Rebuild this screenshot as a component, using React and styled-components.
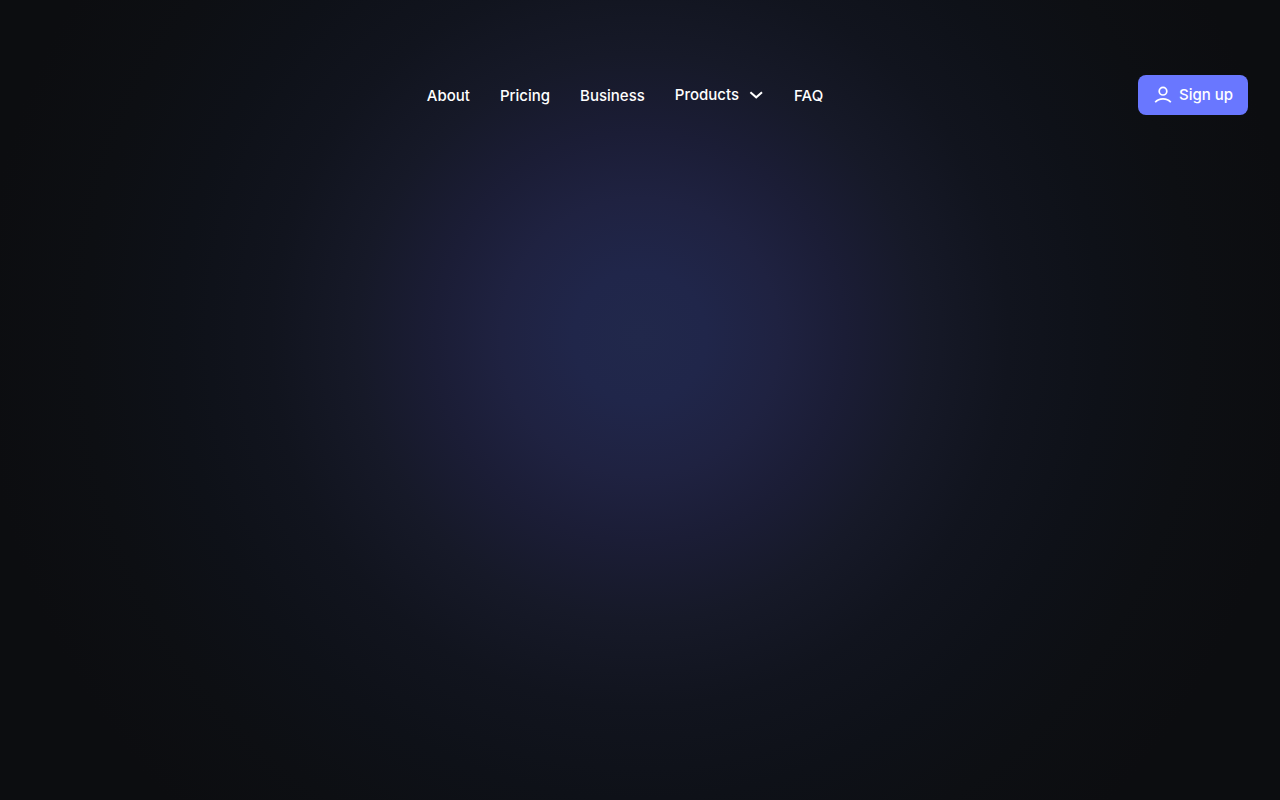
import React from 'react';
import styled, { createGlobalStyle } from 'styled-components';

const links = ['About', 'Pricing', 'Business'];

function App() {
    return (
        <>
            <GlobalStyle />
            <Page>
                <Header>
                    <Nav>
                        {links.map((link) => (
                            <NavLink key={link} href="#">{link}</NavLink>
                        ))}
                        <NavButton type="button">
                            Products
                            <svg width="16" height="16" viewBox="0 0 16 16" fill="none" aria-hidden="true">
                                <path d="M2.4 5.2 8.2 10.3l5.8-5.1" stroke="currentColor" strokeWidth="2" />
                            </svg>
                        </NavButton>
                        <NavLink href="#">FAQ</NavLink>
                    </Nav>
                    <SignUp type="button">
                        <svg width="18" height="18" viewBox="0 0 18 18" fill="none" stroke="currentColor" strokeWidth="1.7" aria-hidden="true">
                            <circle cx="9" cy="5.2" r="3.8" />
                            <path d="M1.2 16.2c1.9-2.2 4.6-3.4 7.8-3.4s5.9 1.2 7.8 3.4" />
                        </svg>
                        Sign up
                    </SignUp>
                </Header>
            </Page>
        </>
    );
}

export default App;

const GlobalStyle = createGlobalStyle`
    * {
        box-sizing: border-box;
    }

    body {
        margin: 0;
        background: #0c0d10;
        color: #fff;
        font-family: Inter, sans-serif;
    }
`

const Page = styled.div`
    min-height: 100vh;
    padding: 75px 32px 0;
    background: radial-gradient(circle 660px at 50% 337px, #21284b 0%, #20264a 10%, #1f2241 21%, #1b1d36 31%, #161928 43%, #11141e 56%, #0e1118 70%, #0d0f13 84%, #0c0d10 100%);
`

const Header = styled.header`
    display: grid;
    grid-template-columns: 1fr auto 1fr;
    align-items: center;
`

const Nav = styled.nav`
    grid-column: 2;
    display: flex;
    align-items: flex-end;
    gap: 30px;
    margin-right: 30px;
`

const NavLink = styled.a`
    color: inherit;
    font-size: 15px;
    font-weight: 500;
    line-height: 20px;
    text-decoration: none;
`

const NavButton = styled.button`
    display: flex;
    align-items: center;
    gap: 9px;
    padding: 0;
    border: 0;
    background: none;
    color: inherit;
    font: inherit;
    font-size: 15px;
    font-weight: 500;
    line-height: 22px;
    cursor: pointer;
`

const SignUp = styled.button`
    justify-self: end;
    display: flex;
    align-items: center;
    gap: 7px;
    width: 110px;
    height: 40px;
    padding: 0 0 0 16px;
    border: 0;
    border-radius: 8px;
    background: #6977ff;
    color: #fff;
    font: inherit;
    font-size: 15px;
    font-weight: 500;
    line-height: 20px;
    cursor: pointer;
`
